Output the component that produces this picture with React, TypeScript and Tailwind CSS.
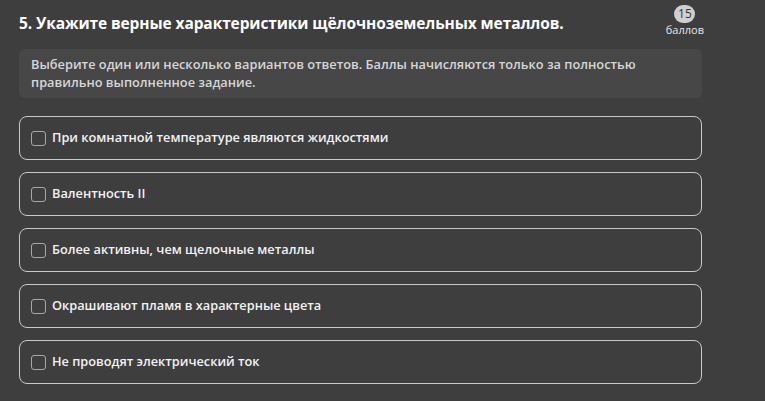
import React from 'react';

const options = [
  'При комнатной температуре являются жидкостями',
  'Валентность II',
  'Более активны, чем щелочные металлы',
  'Окрашивают пламя в характерные цвета',
  'Не проводят электрический ток',
];

export default function App() {
  return (
    <div
      className="h-[401px] w-[765px] overflow-hidden bg-[#3e3e3e] text-white"
      style={{ fontFamily: '"Open Sans", "Noto Sans", sans-serif' }}
    >
      <div className="w-[683px] ml-[19px] pt-[5px]">
        {/* header */}
        <div className="flex items-start justify-between">
          <h1 className="mt-[8px] text-[15.5px] font-bold leading-5 tracking-[-0.1px]">
            5. Укажите верные характеристики щёлочноземельных металлов.
          </h1>
          <div className="flex flex-col items-center mr-[-2px]">
            <span className="flex h-[18px] w-[21px] items-center justify-center rounded-full bg-[#cfcfcf] text-[12px] leading-none text-[#333]">
              15
            </span>
            <span className="text-[11px] leading-[13px] text-[#e6e6e6]">баллов</span>
          </div>
        </div>

        {/* hint */}
        <div className="mt-[13px] rounded-md bg-[#474747] px-3 pt-[6px] pb-[7px] text-[12.8px] font-semibold leading-[18px] text-[#d6d6d6]">
          Выберите один или несколько вариантов ответов. Баллы начисляются только за полностью
          <br />
          правильно выполненное задание.
        </div>

        {/* options */}
        <div className="mt-[18px] flex flex-col gap-3">
          {options.map((o) => (
            <label
              key={o}
              className="flex h-[44px] items-center gap-[6px] rounded-lg border-[1.5px] border-[#c9c9c9] pl-[11px] pr-3"
            >
              <span className="h-[15px] w-[15px] shrink-0 rounded-[3px] border border-[#a8a8a8]" />
              <span className="text-[12.75px] font-semibold text-[#f2f2f2]">{o}</span>
            </label>
          ))}
        </div>
      </div>
    </div>
  );
}
